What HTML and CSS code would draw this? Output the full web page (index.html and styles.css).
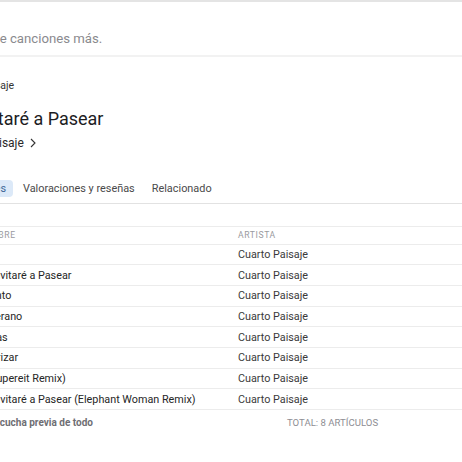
FILE: index.html
```html
<html>
<head>
<meta charset="utf-8">
<link rel="stylesheet" href="styles.css">
</head>
<body>
<div class="page">
  <div class="topline"></div>
  <div class="promo">Y miles de canciones más.</div>

  <div class="album">
    <div class="crumb">Cuarto Paisaje</div>
    <h1 class="title">Te Invitaré a Pasear</h1>
    <a class="artistLink" href="#">Cuarto Paisaje
      <svg class="chev" width="6" height="10" viewBox="0 0 6 10"><path d="M1 1l4 4-4 4" fill="none" stroke="#333" stroke-width="1.1"/></svg>
    </a>
  </div>

  <div class="tabs">
    <span class="tab active">Canciones</span>
    <span class="tab">Valoraciones y reseñas</span>
    <span class="tab">Relacionado</span>
  </div>

  <div class="tracks">
    <div class="row head"><span class="num"></span><span class="name">NOMBRE</span><span class="artist">ARTISTA</span></div>
    <div class="row"><span class="num">1</span><span class="name">Ola</span><span class="artist">Cuarto Paisaje</span></div>
    <div class="row"><span class="num">2</span><span class="name">Te Invitaré a Pasear</span><span class="artist">Cuarto Paisaje</span></div>
    <div class="row"><span class="num">3</span><span class="name">Cuánto</span><span class="artist">Cuarto Paisaje</span></div>
    <div class="row"><span class="num">4</span><span class="name">El Verano</span><span class="artist">Cuarto Paisaje</span></div>
    <div class="row"><span class="num">5</span><span class="name">Almas</span><span class="artist">Cuarto Paisaje</span></div>
    <div class="row"><span class="num">6</span><span class="name">Aterrizar</span><span class="artist">Cuarto Paisaje</span></div>
    <div class="row"><span class="num">7</span><span class="name">Ir (Supereit Remix)</span><span class="artist">Cuarto Paisaje</span></div>
    <div class="row"><span class="num">8</span><span class="name">Te Invitaré a Pasear (Elephant Woman Remix)</span><span class="artist">Cuarto Paisaje</span></div>
  </div>

  <div class="foot">
    <span class="preview">Escucha previa de todo</span>
    <span class="total">TOTAL: 8 ARTÍCULOS</span>
  </div>
</div>
</body>
</html>
```

FILE: styles.css
```css
html, body {
    margin: 0;
    overflow: hidden;
    background: #fff;
}

body {
    font-family: Roboto, "Liberation Sans", sans-serif;
    color: #1d1d1f;
}

.page {
    margin-left: -54px;
    width: 760px;
}

.topline {
    height: 1.5px;
    background: #e4e4e4;
}

.promo {
    height: 55px;
    box-sizing: border-box;
    padding-top: 28px;
    font-size: 13.2px;
    line-height: 18px;
    color: #8a8a8e;
    border-bottom: 2px solid #f2f2f2;
}

.album {
    padding-top: 22px;
}

.crumb {
    font-size: 10.5px;
    line-height: 14px;
    color: #333;
}

.title {
    margin: 14px 0 0 0;
    font-size: 18px;
    line-height: 23px;
    font-weight: normal;
    color: #1d1d1f;
}

.artistLink {
    display: flex;
    align-items: center;
    gap: 6px;
    margin-top: 5px;
    font-size: 12px;
    line-height: 16px;
    color: #2a2a2a;
    text-decoration: none;
}

.tabs {
    display: flex;
    gap: 3px;
    margin-top: 29px;
    padding-left: 2px;
    padding-bottom: 6px;
    border-bottom: 1px solid #e2e2e2;
}

.tab {
    padding: 0 7px;
    height: 17px;
    line-height: 17px;
    font-size: 10.9px;
    color: #4a4a4a;
    border-radius: 4px;
}

.tab.active {
    background: #dce9f8;
    color: #3d6496;
}

.tracks {
    margin-top: 22px;
    border-top: 1px solid #ececec;
}

.row {
    display: flex;
    height: 20.7px;
    box-sizing: border-box;
    align-items: center;
    border-bottom: 1px solid #ececec;
    font-size: 10.8px;
    color: #262626;
}

.row.head {
    height: 18px;
    font-size: 8.6px;
    letter-spacing: 0.6px;
    color: #9a9a9e;
}

.num {
    width: 31px;
    visibility: hidden;
}

.name {
    width: 261px;
    white-space: nowrap;
}

.artist {
    width: 200px;
    color: #3a3a3a;
}

.row.head .artist {
    color: #9a9a9e;
}

.foot {
    display: flex;
    padding-top: 6px;
    font-size: 10px;
    line-height: 14px;
}

.preview {
    margin-left: 43px;
    width: 298px;
    font-weight: bold;
    color: #6e6e73;
}

.total {
    font-size: 9.6px;
    color: #8e8e93;
}
```
